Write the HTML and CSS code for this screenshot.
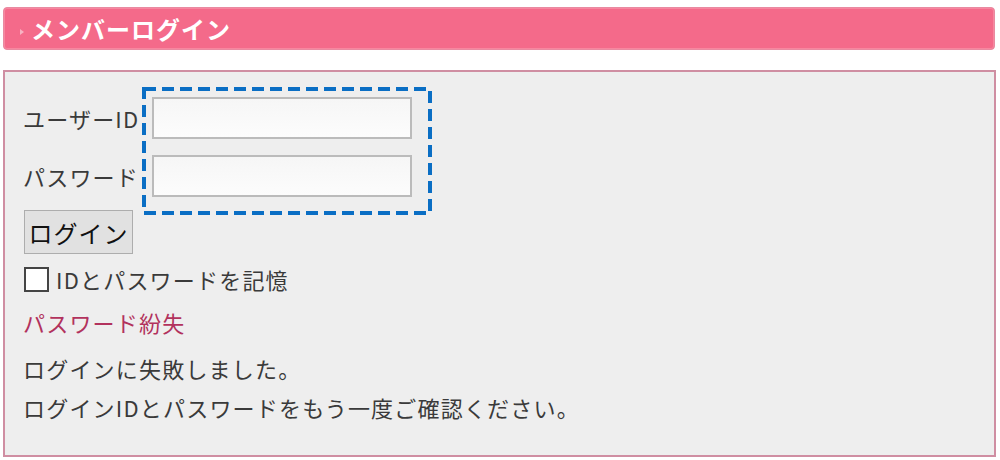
FILE: index.html
```html
<!DOCTYPE html>
<html lang="ja">
<head>
<meta charset="UTF-8">
<title>メンバーログイン</title>
<link rel="stylesheet" href="styles.css">
</head>
<body>

<h2 class="titulo"><span class="flecha"></span>メンバーログイン</h2>

<div class="panel">
    <form class="formulario">
        <div class="fila">
            <label for="usuario">ユーザーID</label>
            <input type="text" id="usuario" name="usuario">
        </div>
        <div class="fila">
            <label for="clave">パスワード</label>
            <input type="password" id="clave" name="clave">
        </div>
        <input type="button" class="boton" value="ログイン">
        <div class="recordar">
            <input type="checkbox" id="recordar">
            <label for="recordar">IDとパスワードを記憶</label>
        </div>
        <a class="enlace" href="#">パスワード紛失</a>
        <p class="mensaje">ログインに失敗しました。<br>ログインIDとパスワードをもう一度ご確認ください。</p>
    </form>

    <svg class="marca" width="290" height="128" viewBox="0 0 290 128">
        <rect x="2" y="2" width="286" height="124" fill="none" stroke="#0a6ec4" stroke-width="4" stroke-dasharray="12 6"/>
    </svg>
</div>

</body>
</html>
```

FILE: styles.css
```css
body {
    margin: 0;
    font-family: "Noto Sans CJK JP", "Noto Sans", sans-serif;
    color: #3a3a3a;
    background: #fff;
}
.titulo {
    display: flex;
    align-items: center;
    height: 41px;
    margin: 7px 5px 0 3px;
    padding: 0 0 0 16px;
    background-color: #f46a8a;
    border: 1px solid #e98aa1;
    border-radius: 4px;
    box-shadow: inset 0 0 0 1px #f7879f;
    color: #fff;
    font-size: 24px;
    letter-spacing: 1px;
    font-weight: bold;
}
.flecha {
    width: 0;
    height: 0;
    margin: 6px 7px 0 0;
    border-left: 4px solid #f7b2c2;
    border-top: 3px solid transparent;
    border-bottom: 3px solid transparent;
}
.panel {
    position: relative;
    margin: 20px 4px 0 3px;
    height: 383px;
    background-color: #eeeeee;
    border: 2px solid #cf8ea2;
}
.formulario {
    padding: 25px 0 0 18px;
    font-size: 22px;
    letter-spacing: 1.2px;
}
.fila {
    display: flex;
    align-items: center;
    height: 42px;
    margin-bottom: 16px;
}
.fila label {
    width: 129px;
    white-space: nowrap;
}
.fila input {
    box-sizing: border-box;
    width: 260px;
    height: 42px;
    border: 2px solid #bbb;
    background: linear-gradient(#f6f6f6, #fcfcfc);
}
.boton {
    display: block;
    margin: -3px 0 0 1px;
    width: 109px;
    height: 44px;
    padding: 0;
    font-family: "Noto Sans CJK JP", sans-serif;
    font-size: 24px;
    letter-spacing: 1px;
    color: #111;
    background-color: #e1e1e1;
    border: 1px solid #adadad;
}
.recordar {
    display: flex;
    align-items: center;
    height: 30px;
    margin-top: 10px;
}
.recordar input {
    appearance: none;
    width: 25px;
    height: 25px;
    margin: 0 7px 0 1px;
    background: #fff;
    border: 2px solid #444;
}
.enlace {
    display: block;
    margin-top: 8px;
    line-height: 40px;
    color: #b2325d;
    text-decoration: none;
}
.mensaje {
    margin: 7px 0 0 0;
    line-height: 39px;
}
.marca {
    position: absolute;
    left: 137px;
    top: 15px;
}
```
